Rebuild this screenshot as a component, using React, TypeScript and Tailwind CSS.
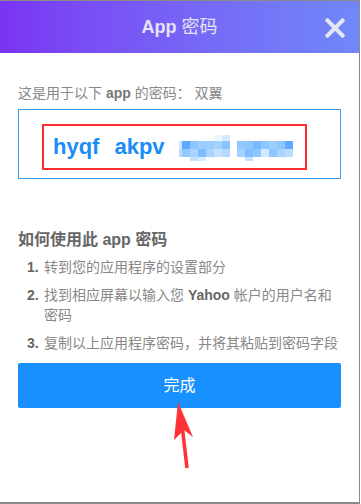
const FONT = 'font-["Liberation_Sans","Noto_Sans_CJK_SC",sans-serif]'

type Cell = [number, number, number, number, string]

const mosaic: Cell[] = [
  // first group
  [216, 134, 8, 6, '#eef6ff'],
  [224, 134, 8, 6, '#d6eaff'],
  [181, 140, 3, 8, '#cfe6ff'],
  [184, 140, 8, 8, '#5aabff'],
  [192, 140, 8, 8, '#8cc5ff'],
  [200, 140, 8, 8, '#9ccdff'],
  [208, 140, 8, 8, '#9ccdff'],
  [216, 140, 8, 8, '#a6d2ff'],
  [224, 140, 8, 8, '#8ac4ff'],
  [181, 148, 3, 8, '#bcdcff'],
  [184, 148, 8, 8, '#94c9ff'],
  [192, 148, 8, 8, '#a8d4ff'],
  [200, 148, 8, 8, '#80bfff'],
  [208, 148, 8, 8, '#a8d4ff'],
  [216, 148, 8, 8, '#c4e2ff'],
  [224, 148, 8, 8, '#b6daff'],
  [192, 156, 8, 4, '#c4e2ff'],
  [200, 156, 8, 4, '#d8ecff'],
  // second group
  [239, 140, 8, 8, '#92c8ff'],
  [247, 140, 8, 8, '#8ec6ff'],
  [255, 140, 8, 8, '#78baff'],
  [263, 140, 8, 8, '#8ec6ff'],
  [271, 140, 8, 8, '#9ccdff'],
  [279, 140, 8, 8, '#8ec6ff'],
  [287, 140, 8, 8, '#5eabff'],
  [239, 148, 8, 8, '#a4d2ff'],
  [247, 148, 8, 8, '#80beff'],
  [255, 148, 8, 8, '#8ec6ff'],
  [263, 148, 8, 8, '#d2e9ff'],
  [271, 148, 8, 8, '#8ec6ff'],
  [279, 148, 8, 8, '#a8d4ff'],
  [287, 148, 8, 8, '#bcdcff'],
  [247, 156, 8, 4, '#c2e1ff'],
]

function Blurred() {
  return (
    <svg width="115" height="26" viewBox="181 134 115 26" className="shrink-0">
      {mosaic.map(([x, y, w, h, c], i) => (
        <rect key={i} x={x} y={y} width={w} height={h} fill={c} />
      ))}
    </svg>
  )
}

const steps = [
  <>转到您的应用程序的设置部分</>,
  <>找到相应屏幕以输入您 <b className="font-bold text-[#666]">Yahoo</b> 帐户的用户名和密码</>,
  <>复制以上应用程序密码，并将其粘贴到密码字段</>,
]

export default function App() {
  return (
    <div className={`relative w-[360px] h-[504px] bg-white border-t border-r border-b-2 border-[#8a8a8a] flex flex-col ${FONT}`}>
      <header className="relative h-[52px] shrink-0 bg-linear-to-r from-[#7a33f2] to-[#6f88f9] flex items-center justify-center">
        <h1 className="text-[18px] text-[#e4e4f2]">
          <span className="font-bold">App</span> 密码
        </h1>
        <button className="absolute right-[13px] top-[16px] w-[22px] h-[22px] flex items-center justify-center">
          <svg width="20" height="20" viewBox="0 0 20 20">
            <path d="M2.5 2.5 L17.5 17.5 M17.5 2.5 L2.5 17.5" stroke="#e6e6f2" strokeWidth="4" strokeLinecap="square" />
          </svg>
        </button>
      </header>

      <main className="flex flex-col px-[18px]">
        <p className="mt-[30px] text-[14px] leading-[20px] text-[#888]">
          这是用于以下 <b className="font-bold text-[#777]">app</b> 的密码： 双翼
        </p>

        <div className="mt-[6px] h-[70px] border border-[#3c9cf0] pl-[23px] pt-[14px]">
          <div className="w-[265px] h-[46px] border-2 border-[#ff2e2e] flex items-center pl-[9px]">
            <span className="text-[22px] font-bold text-[#1a8cf7] leading-none">hyqf</span>
            <span className="ml-[15px] text-[22px] font-bold text-[#1a8cf7] leading-none">akpv</span>
            <span className="ml-[14px] mt-[2px]">
              <Blurred />
            </span>
          </div>
        </div>

        <h2 className="mt-[50px] text-[16px] leading-[22px] font-bold text-[#666]">如何使用此 app 密码</h2>

        <ol className="mt-[6px] flex flex-col gap-[8px] text-[14px] leading-[20px] text-[#888]">
          {steps.map((s, i) => (
            <li key={i} className="flex">
              <span className="w-[26px] shrink-0 pl-[9px] font-bold text-[#666]">{i + 1}.</span>
              <p>{s}</p>
            </li>
          ))}
        </ol>

        <button className="mt-[10px] h-[45px] w-full rounded-[2px] bg-[#1890ff] text-white text-[16px]">
          完成
        </button>
      </main>

      <svg className="absolute left-0 top-0 pointer-events-none" width="361" height="504" viewBox="0 0 361 504">
        <line x1="182.5" y1="428" x2="187" y2="467" stroke="#ff3236" strokeWidth="3.5" />
        <polygon points="178,401 193,436 184,429 174,439" fill="#ff3236" />
      </svg>
    </div>
  )
}
